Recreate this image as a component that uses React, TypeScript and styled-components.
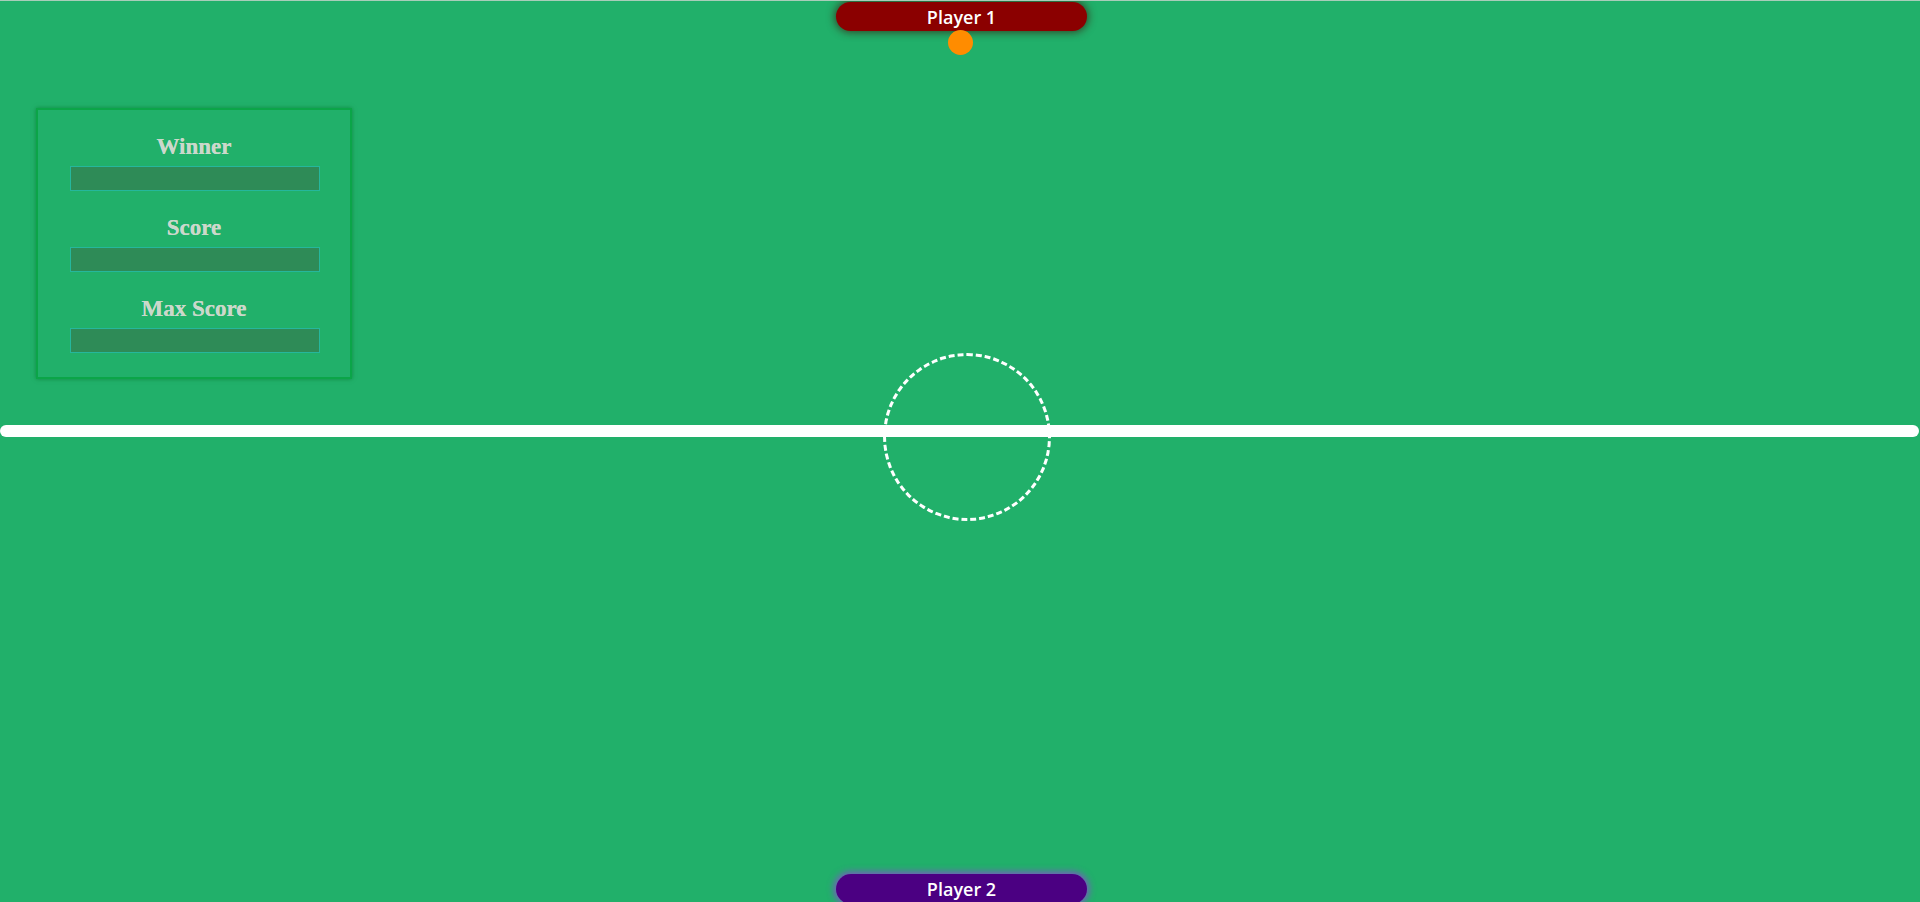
import React from "react";
import styled, { createGlobalStyle } from "styled-components";

const GlobalStyle = createGlobalStyle`
  html, body {
    margin: 0;
    padding: 0;
    height: 100%;
    overflow: hidden;
    background: #21b06a;
  }
  #root { height: 100%; }
`;

const Field = styled.main`
  width: 100%;
  height: 902px;
  background: #21b06a;
  border-top: 1px solid #a9cdb9;
  box-sizing: border-box;
  overflow: hidden;
  display: flex;
  flex-direction: column;
  align-items: center;
`;

const Paddle = styled.div<{ $side: "top" | "bottom" }>`
  flex: none;
  width: 251px;
  height: 30px;
  margin-left: 3px;
  border-radius: 15px;
  display: flex;
  align-items: center;
  justify-content: center;
  color: #ffffff;
  font-family: "Comic Sans MS", "Open Sans", sans-serif;
  font-weight: 600;
  font-size: 18px;
  ${({ $side }) =>
    $side === "top"
      ? `margin-top: 1px; height: 29px; background: #8b0000; box-shadow: 0 0 8px 1px rgba(60, 20, 10, 0.75);`
      : `margin-top: auto; margin-bottom: -2px; background: #4b0082; box-shadow: 0 0 7px 2px rgba(150, 60, 220, 0.8);`}
`;

const Ball = styled.div`
  flex: none;
  width: 25px;
  height: 25px;
  margin-top: -1px;
  border-radius: 50%;
  background: #ff8c00;
`;

const MidLine = styled.div`
  position: relative;
  flex: none;
  align-self: stretch;
  margin: 46px 1px 0 0;
  height: 12px;
  border-radius: 6px;
  background: #ffffff;
`;

const CenterCircle = styled.div`
  position: absolute;
  left: calc(50% - 77px);
  top: -72px;
  width: 162px;
  height: 162px;
  border-radius: 50%;
  border: 3px dashed #ffffff;
`;

const ScoreBoard = styled.section`
  flex: none;
  align-self: flex-start;
  margin: 53px 0 0 36px;
  width: 312px;
  box-sizing: content-box;
  border: 2px solid #0ba548;
  box-shadow: 0 0 4px rgba(0, 110, 40, 0.6);
  padding: 24px 0 24px;
  display: flex;
  flex-direction: column;
  align-items: center;
  gap: 24px;
`;

const Group = styled.div`
  display: flex;
  flex-direction: column;
  align-items: center;
  gap: 7px;
`;

const Label = styled.h3`
  margin: 0;
  font-family: "Liberation Serif", "Times New Roman", serif;
  font-weight: bold;
  font-size: 23px;
  line-height: 25px;
  color: #cbd8cb;
  text-shadow: 0 0 0.4px #cbd8cb;
`;

const ValueBox = styled.input`
  width: 250px;
  height: 25px;
  box-sizing: border-box;
  margin: 0 0 0 2px;
  padding: 0 4px;
  background: #2e8b57;
  border: 1px solid #25b79c;
  color: #ffffff;
  outline: none;
`;

const rows = ["Winner", "Score", "Max Score"];

export default function App() {
  return (
    <>
      <GlobalStyle />
      <Field>
        <Paddle $side="top">Player 1</Paddle>
        <Ball />
        <ScoreBoard>
          {rows.map((r) => (
            <Group key={r}>
              <Label>{r}</Label>
              <ValueBox type="text" readOnly aria-label={r} />
            </Group>
          ))}
        </ScoreBoard>
        <MidLine>
          <CenterCircle />
        </MidLine>
        <Paddle $side="bottom">Player 2</Paddle>
      </Field>
    </>
  );
}
